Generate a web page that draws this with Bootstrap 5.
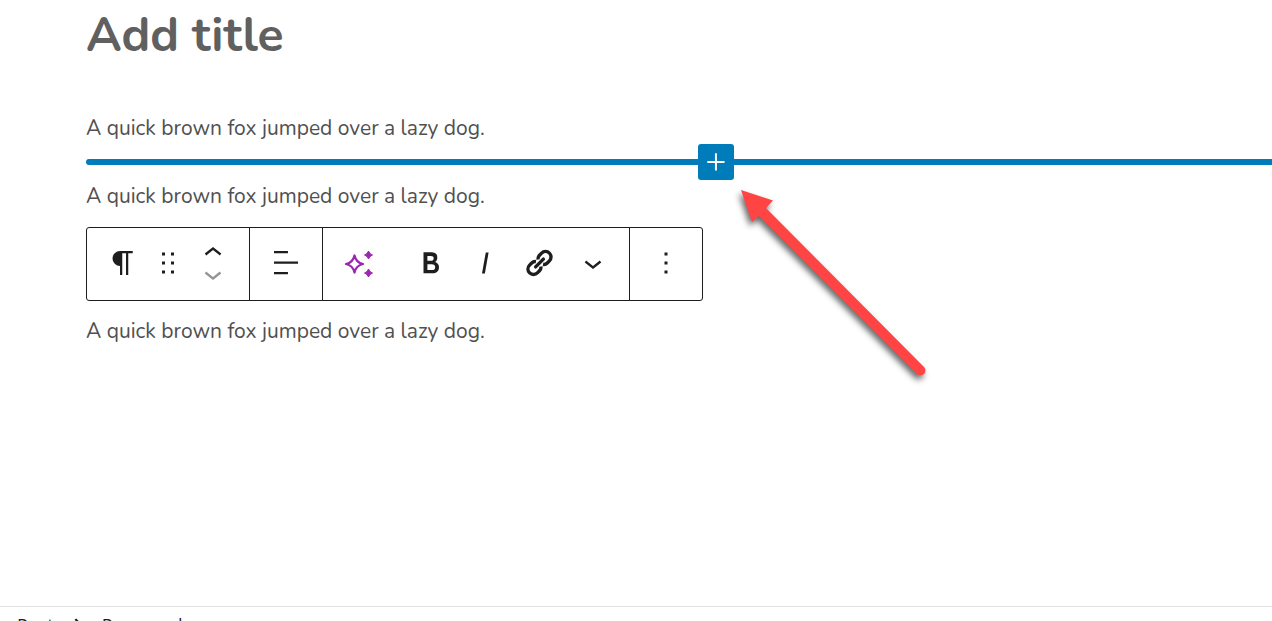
<!DOCTYPE html>
<html lang="en">
<head>
<meta charset="utf-8">
<meta name="viewport" content="width=device-width, initial-scale=1">
<title>Add title</title>
<link href="https://cdn.jsdelivr.net/npm/bootstrap@5.3.0/dist/css/bootstrap.min.css" rel="stylesheet">
<style>
  body { font-family: Nunito, Lato, "Open Sans", sans-serif; color: #505050; }
  .editor-canvas { height: calc(100vh - 15px); padding: 0 86px; }
  .post-title { font-size: 48px; line-height: 70px; color: #606060; margin-bottom: 40px; }
  .block-text { font-size: 21px; line-height: 36px; }
  .inserter { height: 32px; margin-right: -160px; }
  .inserter::before { content: ""; position: absolute; left: 0; right: 0; top: 13px; height: 6px; border-radius: 3px; background: #007cba; }
  .inserter-btn { width: 36px; height: 36px; border-radius: 3px; background: #007cba; z-index: 1; }
  .block-toolbar { width: fit-content; height: 74px; margin: 13px 0 12px; border: 1px solid #1e1e1e; border-radius: 3px; color: #1e1e1e; }
  .tool-group { padding: 0 9px 2px; }
  .tool-group + .tool-group { border-left: 1px solid #1e1e1e; }
  .tool { width: 54px; height: 70px; color: inherit; }
  .tool-drag { width: 36px; }
  .mover { height: 21px; width: 54px; overflow: hidden; color: inherit; }
  .mover:disabled { color: #949494; }
  .ai { color: #9b26af; margin-right: 18px; }
  svg { fill: currentColor; display: block; flex: none; }
  .pointer-arrow { left: 730px; top: 180px; filter: drop-shadow(-2px 4px 3px rgba(0,0,0,.6)); }
  .crumbs { height: 15px; gap: 6px; border-top: 1px solid #e0e0e0; font-family: "Open Sans", sans-serif; font-size: 18px; line-height: 36px; padding-left: 17px; color: #1e1e1e; }
  .crumbs a { color: inherit; }
</style>
</head>
<body class="bg-white overflow-hidden">
<main class="editor-canvas position-relative overflow-hidden">
  <h1 class="post-title fw-bold">Add title</h1>
  <p class="block-text m-0">A quick brown fox jumped over a lazy dog.</p>
  <div class="inserter position-relative d-flex align-items-center justify-content-center">
    <button type="button" class="inserter-btn btn p-0 border-0 text-white position-relative" aria-label="Add block">
      <svg width="36" height="36" viewBox="0 0 24 24"><path d="M17.700 11.300h-5.100V6.200h-1.300v5.100H6.200v1.300h5.100v5.100h1.300v-5.100h5.100z"/></svg>
    </button>
  </div>
  <p class="block-text m-0">A quick brown fox jumped over a lazy dog.</p>
  <div class="block-toolbar d-flex" role="toolbar" aria-label="Block tools">
    <div class="tool-group d-flex align-items-center">
      <button type="button" class="tool btn p-0 border-0 d-flex align-items-center justify-content-center" aria-label="Paragraph">
        <svg width="36" height="36" viewBox="0 0 24 24"><path d="m9.996 14v-.225l.004 0v6.225h1.500v-14.500h2.500v14.500h1.500v-14.500h3v-1.500h-8.504a5 5 0 0 0 0 10z"/></svg>
      </button>
      <button type="button" class="tool tool-drag btn p-0 border-0 d-flex align-items-center justify-content-center" aria-label="Drag">
        <svg width="36" height="36" viewBox="0 0 24 24"><path d="M8 7h2V5H8v2zm0 6h2v-2H8v2zm0 6h2v-2H8v2zm6-14v2h2V5h-2zm0 8h2v-2h-2v2zm0 6h2v-2h-2v2z"/></svg>
      </button>
      <div class="d-flex flex-column">
        <button type="button" class="mover btn p-0 border-0 d-flex align-items-center justify-content-center" aria-label="Move up">
          <svg width="36" height="36" viewBox="0 0 24 24"><path d="M6.500 12.400 12 8l5.500 4.400-.9 1.200L12 10l-4.500 3.600-1-1.200z"/></svg>
        </button>
        <button type="button" disabled class="mover btn p-0 border-0 opacity-100 d-flex align-items-center justify-content-center" aria-label="Move down">
          <svg width="36" height="36" viewBox="0 0 24 24"><path d="M17.500 11.600 12 16l-5.500-4.400.9-1.200L12 14l4.500-3.600 1 1.200z"/></svg>
        </button>
      </div>
    </div>
    <div class="tool-group d-flex align-items-center">
      <button type="button" class="tool btn p-0 border-0 d-flex align-items-center justify-content-center" aria-label="Align text">
        <svg width="36" height="36" viewBox="0 0 24 24"><path d="M4 4h9.300v1.500H4zM4 11h16v1.500H4zM4 18h9.300v1.500H4z"/></svg>
      </button>
    </div>
    <div class="tool-group d-flex align-items-center">
      <button type="button" class="tool ai btn p-0 border-0 d-flex align-items-center justify-content-center" aria-label="AI assistant">
        <svg width="36" height="36" viewBox="0 0 36 36"><path d="M13.500 10.500Q15 17.500 22 19 15 20.500 13.500 27.500 12 20.500 5 19 12 17.500 13.500 10.500z" fill="none" stroke="currentColor" stroke-width="2.300" stroke-linejoin="round"/><path d="M27.500 6Q28.500 9 31.500 10 28.500 11 27.500 14 26.500 11 23.500 10 26.500 9 27.500 6zM27.500 24Q28.500 27 31.500 28 28.500 29 27.500 32 26.500 29 23.500 28 26.500 27 27.500 24z" stroke="currentColor"/></svg>
      </button>
      <button type="button" class="tool btn p-0 border-0 d-flex align-items-center justify-content-center" aria-label="Bold">
        <svg width="36" height="36" viewBox="0 0 24 24"><path d="M14.700 11.300c1-.6 1.500-1.600 1.500-3 0-2.300-1.300-3.400-4-3.400H7v14h5.800c1.400 0 2.500-.3 3.300-1 .8-.7 1.200-1.700 1.200-2.900.1-1.900-.8-3.100-2.600-3.700zm-5.100-4h2.300c.6 0 1.100.1 1.400.4.3.3.5.7.5 1.200s-.2 1-.5 1.200c-.3.3-.8.4-1.400.4H9.600V7.300zm4.600 9c-.4.3-1 .4-1.700.4H9.600v-3.900h2.900c.7 0 1.300.2 1.700.5.4.3.6.8.6 1.500s-.2 1.200-.6 1.500z"/></svg>
      </button>
      <button type="button" class="tool btn p-0 border-0 d-flex align-items-center justify-content-center" aria-label="Italic">
        <svg width="36" height="36" viewBox="0 0 24 24"><path d="M12.500 5 10 19h1.900l2.500-14z"/></svg>
      </button>
      <button type="button" class="tool btn p-0 border-0 d-flex align-items-center justify-content-center" aria-label="Link">
        <svg width="36" height="36" viewBox="0 0 36 36"><g transform="rotate(-45 18.500 18)" fill="none" stroke="currentColor" stroke-width="3.400"><path d="M17 21.500a5 5 0 0 1-4 2h-3a5.500 5.500 0 0 1 0-11h3a5 5 0 0 1 4 2M20 14.500a5 5 0 0 1 4-2h3a5.500 5.500 0 0 1 0 11h-3a5 5 0 0 1-4-2"/><path d="M13 18h11" stroke-linecap="round"/></g></svg>
      </button>
      <button type="button" class="tool btn p-0 border-0 d-flex align-items-center justify-content-center" aria-label="More">
        <svg width="36" height="36" viewBox="0 0 24 24"><path d="M17.500 11.600 12 16l-5.500-4.400.9-1.200L12 14l4.500-3.600 1 1.200z"/></svg>
      </button>
    </div>
    <div class="tool-group d-flex align-items-center">
      <button type="button" class="tool btn p-0 border-0 d-flex align-items-center justify-content-center" aria-label="Options">
        <svg width="36" height="36" viewBox="0 0 24 24"><path d="M13 19h-2v-2h2v2zm0-6h-2v-2h2v2zm0-6h-2V5h2v2z"/></svg>
      </button>
    </div>
  </div>
  <p class="block-text m-0">A quick brown fox jumped over a lazy dog.</p>
  <svg class="pointer-arrow position-absolute" width="205" height="205" viewBox="0 0 205 205" aria-hidden="true"><path d="M11 10 43 20.500 36 28 194 187a4.800 4.800 0 0 1-7 7L29 36 22 42z" fill="#ff4444"/></svg>
</main>
<footer class="crumbs d-flex overflow-hidden">
  <a href="#" class="text-decoration-none">Post</a>
  <svg width="36" height="36" viewBox="0 0 24 24"><path d="M10.800 7.600 9.700 8.500l3.400 3.500-3.400 3.600 1.100.9 4.200-4.500z"/></svg>
  <a href="#" class="text-decoration-none">Paragraph</a>
</footer>
<script src="https://cdn.jsdelivr.net/npm/bootstrap@5.3.0/dist/js/bootstrap.bundle.min.js"></script>
</body>
</html>
